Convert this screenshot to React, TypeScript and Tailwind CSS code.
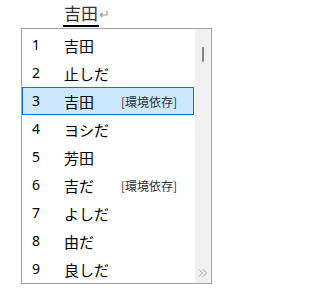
import React from "react";

const rows: { n: number; text: string; note?: string }[] = [
  { n: 1, text: "吉田" },
  { n: 2, text: "止しだ" },
  { n: 3, text: "吉田", note: "[環境依存]" },
  { n: 4, text: "ヨシだ" },
  { n: 5, text: "芳田" },
  { n: 6, text: "吉だ", note: "[環境依存]" },
  { n: 7, text: "よしだ" },
  { n: 8, text: "由だ" },
  { n: 9, text: "良しだ" },
];

export default function App() {
  return (
    <div
      className="w-[232px] h-[290px] bg-white text-black overflow-hidden"
      style={{ fontFamily: '"Noto Sans", "Noto Sans CJK JP", sans-serif' }}
    >
      <div className="h-[28px] pl-[63px] pt-[1px] flex items-start">
        <span
          className="border-b-2 border-black px-[1px] text-[17px] leading-[24px] text-[#333]"
          style={{ fontFamily: '"Noto Sans CJK JP", sans-serif' }}
        >
          吉田
        </span>
        <span className="text-[13px] leading-[24px] text-[#999] mt-[1px]">↵</span>
      </div>
      <div className="ml-[21px] w-[191px] h-[256px] border border-[#a0a0a0] flex">
        <div className="w-[173px] pt-[2px]">
          {rows.map((r) => (
            <div
              key={r.n}
              className={
                "h-[28px] w-[172px] flex items-center border " +
                (r.n === 3 ? "bg-[#cce8ff] border-[#0078d7]" : "border-transparent")
              }
            >
              <span className="w-[41px] pl-[9px] text-[14px] leading-none">{r.n}</span>
              <span
                className="w-[57px] text-[15px] leading-none"
                style={{ fontFamily: '"Noto Sans CJK JP", sans-serif' }}
              >
                {r.text}
              </span>
              {r.note && (
                <span
                  className="text-[12px] leading-none text-[#333] mt-[2px]"
                  style={{ fontFamily: '"Noto Sans CJK JP", sans-serif' }}
                >
                  {r.note}
                </span>
              )}
            </div>
          ))}
        </div>
        <div className="w-[16px] bg-[#f0f0f0] flex flex-col items-center">
          <div className="mt-[18px] w-[2px] h-[15px] rounded-full bg-[#858585]" />
          <div className="flex-1" />
          <svg width="10" height="10" viewBox="0 0 10 10" className="mb-[5px]">
            <path d="M1 1.5 L4.5 5 L1 8.5 M5 1.5 L8.5 5 L5 8.5" fill="none" stroke="#a5a5a5" strokeWidth="1" />
          </svg>
        </div>
      </div>
    </div>
  );
}
